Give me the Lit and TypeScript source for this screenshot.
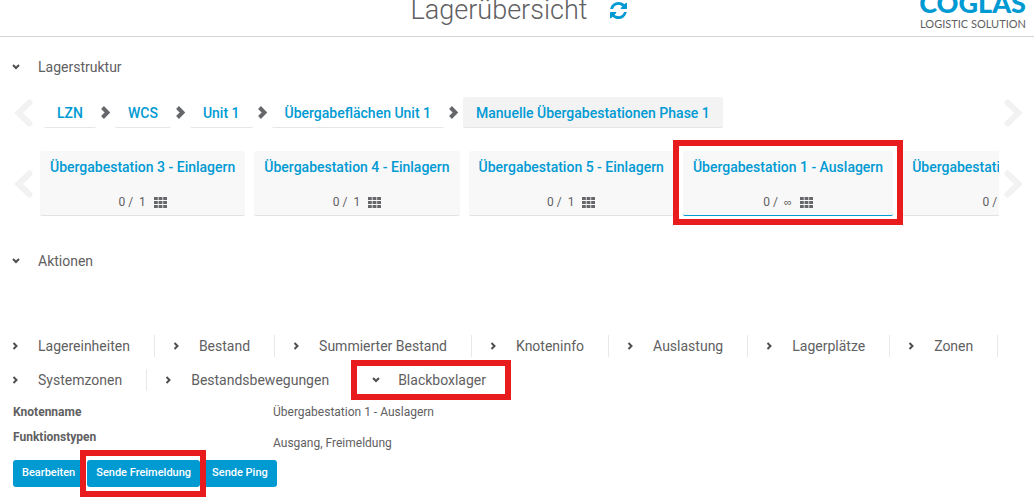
import { LitElement, html, css, svg } from "lit";
import { customElement } from "lit/decorators.js";
import { classMap } from "lit/directives/class-map.js";

interface Station {
  name: string;
  capacity: string;
  selected?: boolean;
}

const PATH = ["LZN", "WCS", "Unit 1", "Übergabeflächen Unit 1", "Manuelle Übergabestationen Phase 1"];

const STATIONS: Station[] = [
  { name: "Übergabestation 3 - Einlagern", capacity: "1" },
  { name: "Übergabestation 4 - Einlagern", capacity: "1" },
  { name: "Übergabestation 5 - Einlagern", capacity: "1" },
  { name: "Übergabestation 1 - Auslagern", capacity: "∞", selected: true },
  { name: "Übergabestation 2 - Auslagern", capacity: "∞" },
];

const TABS = [
  "Lagereinheiten",
  "Bestand",
  "Summierter Bestand",
  "Knoteninfo",
  "Auslastung",
  "Lagerplätze",
  "Zonen",
  "Systemzonen",
  "Bestandsbewegungen",
  "Blackboxlager",
];

const refreshIcon = html`<svg class="refresh-icon" viewBox="0 0 1536 1536" aria-hidden="true">
  <path
    d="M1511 928q0 5-1 7-64 268-268 434.500t-478 166.500q-146 0-282.500-55t-243.500-157l-129 129q-19 19-45 19t-45-19-19-45v-448q0-26 19-45t45-19h448q26 0 45 19t19 45-19 45l-137 137q71 66 161 102t187 36q134 0 250-65t186-179q11-17 53-117 8-23 30-23h192q13 0 22.500 9.500t9.500 22.500zm25-800v448q0 26-19 45t-45 19h-448q-26 0-45-19t-19-45 19-45l138-138q-148-137-349-137-134 0-250 65t-186 179q-11 17-53 117-8 23-30 23h-199q-13 0-22.500-9.500t-9.500-22.500v-7q65-268 270-434.500t480-166.500q146 0 284 55.500t245 156.500l130-129q19-19 45-19t45 19 19 45z"
  />
</svg>`;

const toggleIcon = (open: boolean) => html`<svg class="toggle-icon" viewBox="0 0 8 8" aria-hidden="true">
  ${open ? svg`<path d="M1 2 4 5 7 2" />` : svg`<path d="M1.500 1 4.500 4 1.500 7" />`}
</svg>`;

const crumbIcon = html`<svg class="crumb-icon" viewBox="0 0 9 13" aria-hidden="true">
  <path d="M1.500 1.500 6.500 6.500 1.500 11.500" />
</svg>`;

const gridIcon = html`<svg class="grid-icon" viewBox="0 0 13 11" aria-hidden="true">
  <path
    d="M0 0h3.800v3H0zM4.600 0h3.800v3H4.600zM9.200 0H13v3H9.200zM0 4h3.800v3H0zM4.600 4h3.800v3H4.600zM9.200 4H13v3H9.200zM0 8h3.800v3H0zM4.600 8h3.800v3H4.600zM9.200 8H13v3H9.200z"
  />
</svg>`;

const arrow = (dir: "left" | "right") => html`<button
  class="arrow"
  aria-label=${dir === "left" ? "Zurück" : "Weiter"}
>
  <svg viewBox="0 0 19 28" aria-hidden="true">
    ${dir === "left" ? svg`<path d="M15.500 3.500 4.500 14 15.500 24.500" />` : svg`<path d="M3.500 3.500 14.500 14 3.500 24.500" />`}
  </svg>
</button>`;

@customElement("app-root")
export class AppRoot extends LitElement {
  static styles = css`
    :host {
      display: block;
      background: #fff;
      color: #5f6062;
      font: 14px/20px Roboto, "Liberation Sans", sans-serif;
    }
    button {
      font: inherit;
      color: inherit;
      background: none;
      border: 0;
      margin: 0;
      padding: 0;
      cursor: pointer;
    }
    svg {
      display: block;
      flex: none;
    }
    h1, dl, dd, dt, ol { margin: 0; padding: 0; }
    .header {
      display: grid;
      grid-template-columns: 1fr auto 1fr;
      align-items: end;
      align-content: end;
      height: 36px;
      overflow: hidden;
      border-bottom: 1px solid #d4d4d4;
    }
    .heading {
      grid-column: 2;
      display: flex;
      align-items: center;
      gap: 23px;
      padding-bottom: 8px;
      padding-left: 4px;
    }
    .title {
      font-size: 27px;
      line-height: 36px;
      font-weight: 300;
    }
    .refresh-icon {
      width: 17px;
      height: 17px;
      fill: #009ad3;
    }
    .logo {
      justify-self: end;
      padding: 0 8px 4px 0;
      font-family: Lato, sans-serif;
      text-align: right;
    }
    .brand {
      font-size: 27px;
      line-height: 26px;
      font-weight: 900;
      color: #009ad3;
    }
    .claim {
      font-size: 11px;
      line-height: 16px;
    }
    .section {
      display: flex;
      align-items: center;
      gap: 18px;
      height: 20px;
      padding-left: 12px;
      font-size: 14px;
    }
    .section.structure { margin-top: 20px; }
    .section.actions { margin-top: 35px; }
    .toggle-icon {
      width: 8px;
      height: 8px;
      fill: none;
      stroke: #4d4e50;
      stroke-width: 2;
    }
    .strip {
      display: grid;
      grid-template-columns: 19px minmax(0, 1fr) 19px;
      align-items: center;
      padding: 0 11px 0 14px;
    }
    .arrow svg {
      width: 19px;
      height: 28px;
      fill: none;
      stroke: #f2f2f2;
      stroke-width: 6;
      stroke-linecap: round;
    }
    .crumbs-strip { margin-top: 20px; }
    .cards-strip { margin-top: 23px; }
    .crumbs {
      display: flex;
      list-style: none;
      padding-left: 11px;
    }
    .crumb { display: flex; align-items: center; }
    .crumb-link {
      padding: 6px 13px 4px;
      border-bottom: 1px solid #e6e6e6;
      border-radius: 2px;
      color: #009ad3;
      font-weight: 500;
      text-decoration: none;
    }
    .crumb-link.current { background: #f3f3f3; }
    .crumb-icon {
      width: 9px;
      height: 13px;
      margin: 0 5px;
      fill: none;
      stroke: #66676a;
      stroke-width: 4;
    }
    .cards {
      display: flex;
      gap: 9px;
      overflow-x: clip;
      margin: 0 5px 0 7px;
    }
    .card {
      position: relative;
      flex: none;
      padding: 6px 10px 3px;
      border-bottom: 1px solid #e3e3e3;
      border-radius: 2px;
      background: #f8f8f8;
      text-align: center;
    }
    .card.selected { border-color: #009ad3; }
    .card-name {
      display: block;
      color: #009ad3;
      font-weight: 500;
      white-space: nowrap;
      text-decoration: none;
    }
    .card-load {
      display: flex;
      justify-content: center;
      align-items: center;
      gap: 8px;
      margin-top: 15px;
      font-size: 12px;
    }
    .load-numbers { display: flex; gap: 6px; }
    .unlimited { font-family: "Liberation Sans", sans-serif; font-size: 11px; }
    .grid-icon {
      width: 13px;
      height: 11px;
      fill: #66676a;
    }
    .mark {
      position: absolute;
      z-index: 1;
      border: 6px solid #e81c1c;
      pointer-events: none;
    }
    .card .mark { inset: -11px -10px -10px; }
    .tab .mark { inset: -3px 0 -3px -21px; }
    .action .mark { inset: -10px -6px -10px -7px; }
    .tabs {
      display: flex;
      flex-wrap: wrap;
      column-gap: 18px;
      margin-top: 58px;
      padding: 0 12px;
    }
    .tab {
      position: relative;
      display: flex;
      align-items: center;
      height: 34px;
    }
    .tab-button {
      display: flex;
      align-items: center;
      gap: 18px;
      height: 22px;
      padding-right: 24px;
      border-right: 1px solid #e6e8eb;
    }
    .tab:last-child .tab-button { border-color: transparent; }
    .details {
      display: grid;
      grid-template-columns: 260px 1fr;
      padding: 5px 13px 0;
      font-size: 12px;
      line-height: 20px;
    }
    .details dt { font-weight: 700; height: 25px; }
    .details dd.types { padding-top: 6px; }
    .buttons {
      display: flex;
      gap: 3px;
      padding: 7px 13px 16px;
    }
    .action {
      position: relative;
      height: 27px;
      padding: 0 9px 2px;
      border-radius: 3px;
      background: #009ad3;
      color: #fff;
      font-size: 11px;
      font-weight: 500;
    }
  `;

  render() {
    return html`
      <header class="header">
        <div class="heading">
          <h1 class="title">Lagerübersicht</h1>
          <button aria-label="Aktualisieren">${refreshIcon}</button>
        </div>
        <div class="logo">
          <div class="brand">COGLAS</div>
          <div class="claim">LOGISTIC SOLUTION</div>
        </div>
      </header>
      <main>
        <button class="section structure" aria-expanded="true">${toggleIcon(true)}Lagerstruktur</button>
        <div class="strip crumbs-strip">
          ${arrow("left")}
          <ol class="crumbs">
            ${PATH.map(
              (name, i) => html`<li class="crumb">
                ${i > 0 ? crumbIcon : null}
                <a class=${classMap({ "crumb-link": true, current: i === PATH.length - 1 })} href="#">${name}</a>
              </li>`
            )}
          </ol>
          ${arrow("right")}
        </div>
        <div class="strip cards-strip">
          ${arrow("left")}
          <div class="cards">
            ${STATIONS.map(
              (s) => html`<div class=${classMap({ card: true, selected: !!s.selected })}>
                <a class="card-name" href="#">${s.name}</a>
                <div class="card-load">
                  <span class="load-numbers"
                    ><span>0 /</span
                    ><span class=${classMap({ unlimited: s.capacity === "∞" })}>${s.capacity}</span></span
                  >${gridIcon}
                </div>
                ${s.selected ? html`<span class="mark"></span>` : null}
              </div>`
            )}
          </div>
          ${arrow("right")}
        </div>
        <button class="section actions" aria-expanded="true">${toggleIcon(true)}Aktionen</button>
        <div class="tabs">
          ${TABS.map((name) => {
            const open = name === "Blackboxlager";
            return html`<div class="tab">
              <button class="tab-button" aria-expanded=${open}>${toggleIcon(open)}${name}</button>
              ${open ? html`<span class="mark"></span>` : null}
            </div>`;
          })}
        </div>
        <dl class="details">
          <dt>Knotenname</dt>
          <dd>Übergabestation 1 - Auslagern</dd>
          <dt>Funktionstypen</dt>
          <dd class="types">Ausgang, Freimeldung</dd>
        </dl>
        <div class="buttons">
          <button class="action">Bearbeiten</button>
          <button class="action">Sende Freimeldung<span class="mark"></span></button>
          <button class="action">Sende Ping</button>
        </div>
      </main>
    `;
  }
}
